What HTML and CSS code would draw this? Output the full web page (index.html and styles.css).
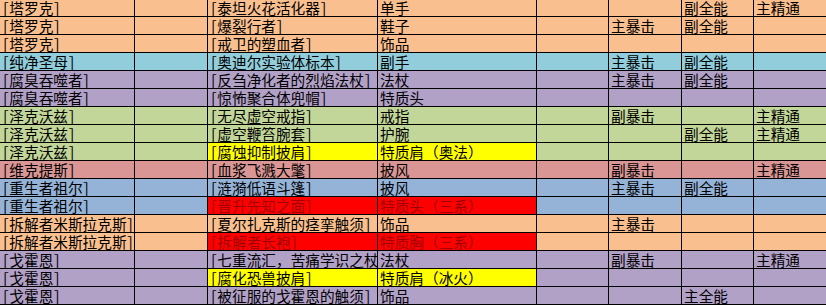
FILE: index.html
```html
<!DOCTYPE html>
<html lang="zh-CN">
<head>
<meta charset="utf-8">
<title>掉落表</title>
<link rel="stylesheet" href="styles.css">
</head>
<body>
<table class="sheet">
  <colgroup>
    <col class="c-boss"><col class="c-gap"><col class="c-item"><col class="c-slot">
    <col class="c-gap2"><col class="c-crit"><col class="c-vers"><col class="c-mast">
  </colgroup>
  <tbody>
    <tr class="orange"><td>[塔罗克]</td><td></td><td>[泰坦火花活化器]</td><td>单手</td><td></td><td></td><td>副全能</td><td>主精通</td></tr>
    <tr class="orange"><td>[塔罗克]</td><td></td><td>[爆裂行者]</td><td>鞋子</td><td></td><td>主暴击</td><td>副全能</td><td></td></tr>
    <tr class="orange"><td>[塔罗克]</td><td></td><td>[戒卫的塑血者]</td><td>饰品</td><td></td><td></td><td></td><td></td></tr>
    <tr class="cyan"><td>[纯净圣母]</td><td></td><td>[奥迪尔实验体标本]</td><td>副手</td><td></td><td>主暴击</td><td>副全能</td><td></td></tr>
    <tr class="purple"><td>[腐臭吞噬者]</td><td></td><td>[反刍净化者的烈焰法杖]</td><td>法杖</td><td></td><td>主暴击</td><td>副全能</td><td></td></tr>
    <tr class="purple"><td>[腐臭吞噬者]</td><td></td><td>[惊怖聚合体兜帽]</td><td>特质头</td><td></td><td></td><td></td><td></td></tr>
    <tr class="green"><td>[泽克沃兹]</td><td></td><td>[无尽虚空戒指]</td><td>戒指</td><td></td><td>副暴击</td><td></td><td>主精通</td></tr>
    <tr class="green"><td>[泽克沃兹]</td><td></td><td>[虚空鞭笞腕套]</td><td>护腕</td><td></td><td></td><td>副全能</td><td>主精通</td></tr>
    <tr class="green"><td>[泽克沃兹]</td><td></td><td class="hl-yellow">[腐蚀抑制披肩]</td><td class="hl-yellow fw">特质肩（奥法）</td><td></td><td></td><td></td><td></td></tr>
    <tr class="pink"><td>[维克提斯]</td><td></td><td>[血浆飞溅大氅]</td><td>披风</td><td></td><td>副暴击</td><td></td><td>主精通</td></tr>
    <tr class="blue"><td>[重生者祖尔]</td><td></td><td>[涟漪低语斗篷]</td><td>披风</td><td></td><td>主暴击</td><td>副全能</td><td></td></tr>
    <tr class="blue"><td>[重生者祖尔]</td><td></td><td class="hl-red">[晋升先知之面]</td><td class="hl-red fw">特质头（三系）</td><td></td><td></td><td></td><td></td></tr>
    <tr class="orange"><td>[拆解者米斯拉克斯]</td><td></td><td>[夏尔扎克斯的痉挛触须]</td><td>饰品</td><td></td><td>主暴击</td><td></td><td></td></tr>
    <tr class="orange"><td>[拆解者米斯拉克斯]</td><td></td><td class="hl-red">[拆解者长袍]</td><td class="hl-red fw">特质胸（三系）</td><td></td><td></td><td></td><td></td></tr>
    <tr class="purple"><td>[戈霍恩]</td><td></td><td>[七重流汇<span class="fw">，</span>苦痛学识之杖]</td><td>法杖</td><td></td><td>副暴击</td><td></td><td>主精通</td></tr>
    <tr class="purple"><td>[戈霍恩]</td><td></td><td class="hl-yellow">[腐化恐兽披肩]</td><td class="hl-yellow fw">特质肩（冰火）</td><td></td><td></td><td></td><td></td></tr>
    <tr class="purple"><td>[戈霍恩]</td><td></td><td>[被征服的戈霍恩的触须]</td><td>饰品</td><td></td><td></td><td>主全能</td><td></td></tr>
  </tbody>
</table>
</body>
</html>
```

FILE: styles.css
```css
html, body {
  margin: 0;
  padding: 0;
  overflow: hidden;
  background: #ffffff;
}

.sheet {
  margin: -2px 0 0 -1px;
  width: 828px;
  table-layout: fixed;
  border-collapse: separate;
  border-spacing: 1px;
  background: #000000;
  font-family: "Noto Sans CJK SC", "Noto Sans", sans-serif;
  font-size: 14.67px;
  font-feature-settings: "hwid";
  color: #000000;
}

.sheet .fw {
  font-feature-settings: normal;
}

.c-boss { width: 134px; }
.c-gap  { width: 72px; }
.c-item { width: 169px; }
.c-slot { width: 158px; }
.c-gap2 { width: 71px; }
.c-crit { width: 72px; }
.c-vers { width: 71px; }
.c-mast { width: 72px; }

.sheet td {
  height: 17px;
  padding: 0 0 0 2px;
  line-height: 17px;
  white-space: nowrap;
  overflow: hidden;
  vertical-align: bottom;
}

.orange td { background: #fabf8f; }
.cyan td   { background: #92cddc; }
.purple td { background: #b2a1c7; }
.green td  { background: #c2d69a; }
.pink td   { background: #da9694; }
.blue td   { background: #95b3d7; }

.sheet td.hl-yellow { background: #ffff00; }
.sheet td.hl-red    { background: #ff0000; color: #a00000; }
```
